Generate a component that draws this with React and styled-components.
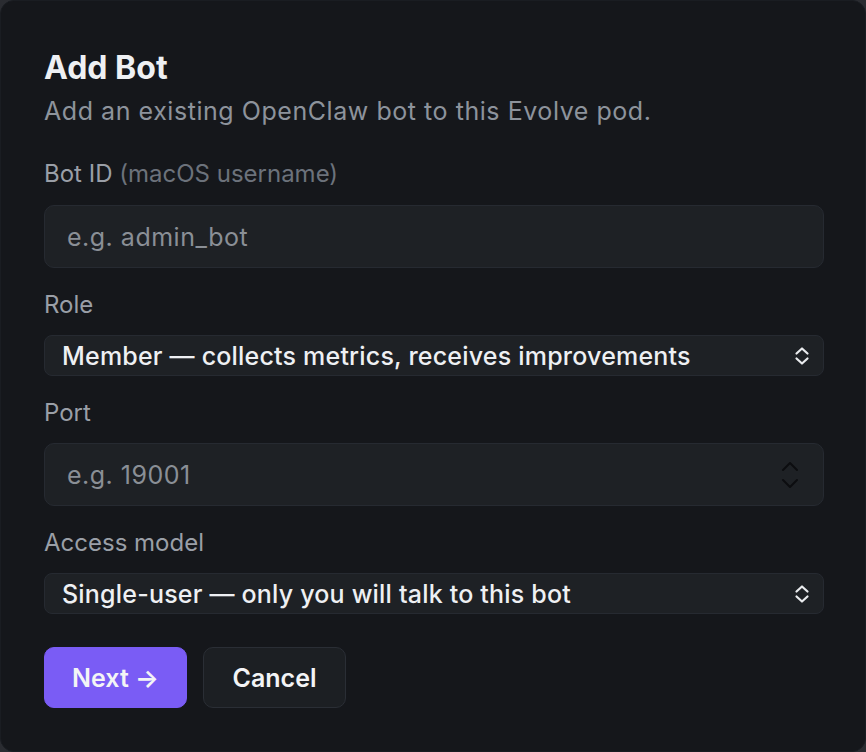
import React from 'react';
import styled, { createGlobalStyle } from 'styled-components';

const GlobalStyle = createGlobalStyle`
  html, body {
    margin: 0;
    padding: 0;
    background: #2a2c31;
  }
  * {
    box-sizing: border-box;
  }
`;

const Card = styled.div`
  width: 100vw;
  height: 100vh;
  background: #15171b;
  border-radius: 14px;
  border: 1px solid #1a1d22;
  padding: 47px 41px 0 43px;
  font-family: Inter, 'Noto Sans', sans-serif;
  display: flex;
  flex-direction: column;
`;

const Title = styled.h2`
  margin: 0 0 7px;
  font-size: 32px;
  font-weight: 700;
  line-height: 40px;
  color: #eef0f3;
`;

const Subtitle = styled.p`
  margin: 0 0 31px;
  font-size: 25px;
  line-height: 32px;
  letter-spacing: 0.55px;
  color: #8d939c;
`;

const Field = styled.div`
  display: flex;
  flex-direction: column;
  margin-bottom: 21px;
`;

const Label = styled.label`
  font-size: 24px;
  line-height: 32px;
  color: #9a9fa7;
  margin-bottom: ${props => props.$space || 14}px;

  span {
    color: #6c727b;
  }
`;

const InputBox = styled.div`
  height: 63px;
  background: #1e2125;
  border: 1px solid #262a31;
  border-radius: 10px;
  display: flex;
  align-items: center;
  padding: 0 24px 0 22px;
  font-size: 25px;
  letter-spacing: 0.5px;
  color: #8a8f96;
`;

const Placeholder = styled.span`
  flex: 1;
`;

const SelectBox = styled.div`
  height: 41px;
  background: #1e2125;
  border: 1px solid #262a31;
  border-radius: 8px;
  display: flex;
  align-items: center;
  padding: 0 13px 0 17px;
  font-size: 25px;
  font-weight: 450;
  letter-spacing: 0.2px;
  color: #eef0f3;
`;

const SelectText = styled.span`
  flex: 1;
`;

const Buttons = styled.div`
  display: flex;
  gap: 16px;
  margin-top: 12px;
`;

const Button = styled.button`
  width: 143px;
  height: 61px;
  border-radius: 10px;
  font-family: Inter, 'Noto Sans', sans-serif;
  font-size: 25px;
  font-weight: 600;
  color: #f3f4f6;
  cursor: pointer;
  border: 1px solid ${props => (props.$primary ? '#7a5cf5' : '#2a2e35')};
  background: ${props => (props.$primary ? '#7a5cf5' : '#1c1f23')};
`;

const SelectChevron = () => (
  <svg width="16" height="20" viewBox="0 0 16 20" fill="none">
    <path d="M2.5 7.5 L8 2.5 L13.5 7.5" stroke="#e9ebee" strokeWidth="2.2" strokeLinecap="round" strokeLinejoin="round" />
    <path d="M2.5 12.5 L8 17.5 L13.5 12.5" stroke="#e9ebee" strokeWidth="2.2" strokeLinecap="round" strokeLinejoin="round" />
  </svg>
);

const Spinner = () => (
  <svg width="18" height="30" viewBox="0 0 18 30" fill="none">
    <path d="M2 10 L9 3 L16 10" stroke="#0c0d10" strokeWidth="2" strokeLinecap="round" strokeLinejoin="round" />
    <path d="M2 20 L9 27 L16 20" stroke="#0c0d10" strokeWidth="2" strokeLinecap="round" strokeLinejoin="round" />
  </svg>
);

export default function App() {
  return (
    <>
      <GlobalStyle />
      <Card>
        <Title>Add Bot</Title>
        <Subtitle>Add an existing OpenClaw bot to this Evolve pod.</Subtitle>

        <Field>
          <Label $space={15}>
            Bot ID <span>(macOS username)</span>
          </Label>
          <InputBox>
            <Placeholder>e.g. admin_bot</Placeholder>
          </InputBox>
        </Field>

        <Field>
          <Label>Role</Label>
          <SelectBox>
            <SelectText>Member — collects metrics, receives improvements</SelectText>
            <SelectChevron />
          </SelectBox>
        </Field>

        <Field>
          <Label>Port</Label>
          <InputBox>
            <Placeholder>e.g. 19001</Placeholder>
            <Spinner />
          </InputBox>
        </Field>

        <Field>
          <Label>Access model</Label>
          <SelectBox>
            <SelectText>Single-user — only you will talk to this bot</SelectText>
            <SelectChevron />
          </SelectBox>
        </Field>

        <Buttons>
          <Button $primary>Next →</Button>
          <Button>Cancel</Button>
        </Buttons>
      </Card>
    </>
  );
}
